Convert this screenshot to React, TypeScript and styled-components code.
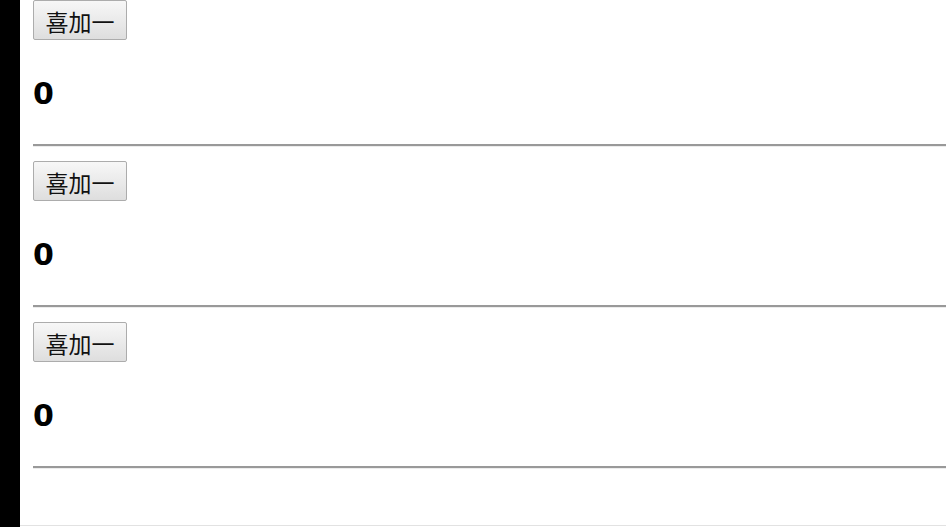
import React, { useState } from 'react'
import styled, { createGlobalStyle } from 'styled-components'

const GlobalStyle = createGlobalStyle`
  html, body {
    margin: 0;
    padding: 0;
    background: #ffffff;
    font-family: 'Liberation Sans', Arial, sans-serif;
  }
`

const Page = styled.div`
  display: flex;
  flex-flow: row nowrap;
  width: 946px;
  height: 527px;
  overflow: hidden;
`

const SideBar = styled.div`
  flex: 0 0 20px;
  background: #000000;
`

const Main = styled.div`
  flex: 1 1 auto;
  box-sizing: border-box;
  height: 526px;
  padding-left: 13px;
  border-bottom: 1px solid #e2e2e2;
  display: flex;
  flex-flow: column nowrap;
`

const Block = styled.div`
  display: flex;
  flex-flow: column nowrap;
  align-items: flex-start;
`

const AddButton = styled.button`
  box-sizing: border-box;
  height: 40px;
  width: 94px;
  margin: 0;
  padding: 3px 0 0;
  font-family: 'Noto Sans CJK SC', 'Microsoft YaHei', sans-serif;
  font-size: 23px;
  line-height: 1;
  color: #111111;
  background: linear-gradient(#f7f7f7, #dedede);
  border: 1px solid #acacac;
  border-radius: 2px;
  cursor: pointer;
`

const Count = styled.h2`
  margin: 38px 0 34px;
  font-family: 'DejaVu Sans', 'Liberation Sans', sans-serif;
  font-size: 30px;
  font-weight: bold;
  line-height: 32px;
  color: #000000;
`

const Divider = styled.div`
  align-self: stretch;
  height: 0;
  border-top: 2px solid #999999;
  border-bottom: 1px solid #ececec;
  margin-bottom: 14px;
`

const Counter: React.FC = () => {
  const [count, setCount] = useState(0)

  return (
    <Block>
      <AddButton onClick={() => setCount(count + 1)}>喜加一</AddButton>
      <Count>{count}</Count>
      <Divider />
    </Block>
  )
}

export default function App() {
  return (
    <>
      <GlobalStyle />
      <Page>
        <SideBar />
        <Main>
          {[0, 1, 2].map((idx) => (
            <Counter key={`counter-${idx}`} />
          ))}
        </Main>
      </Page>
    </>
  )
}
